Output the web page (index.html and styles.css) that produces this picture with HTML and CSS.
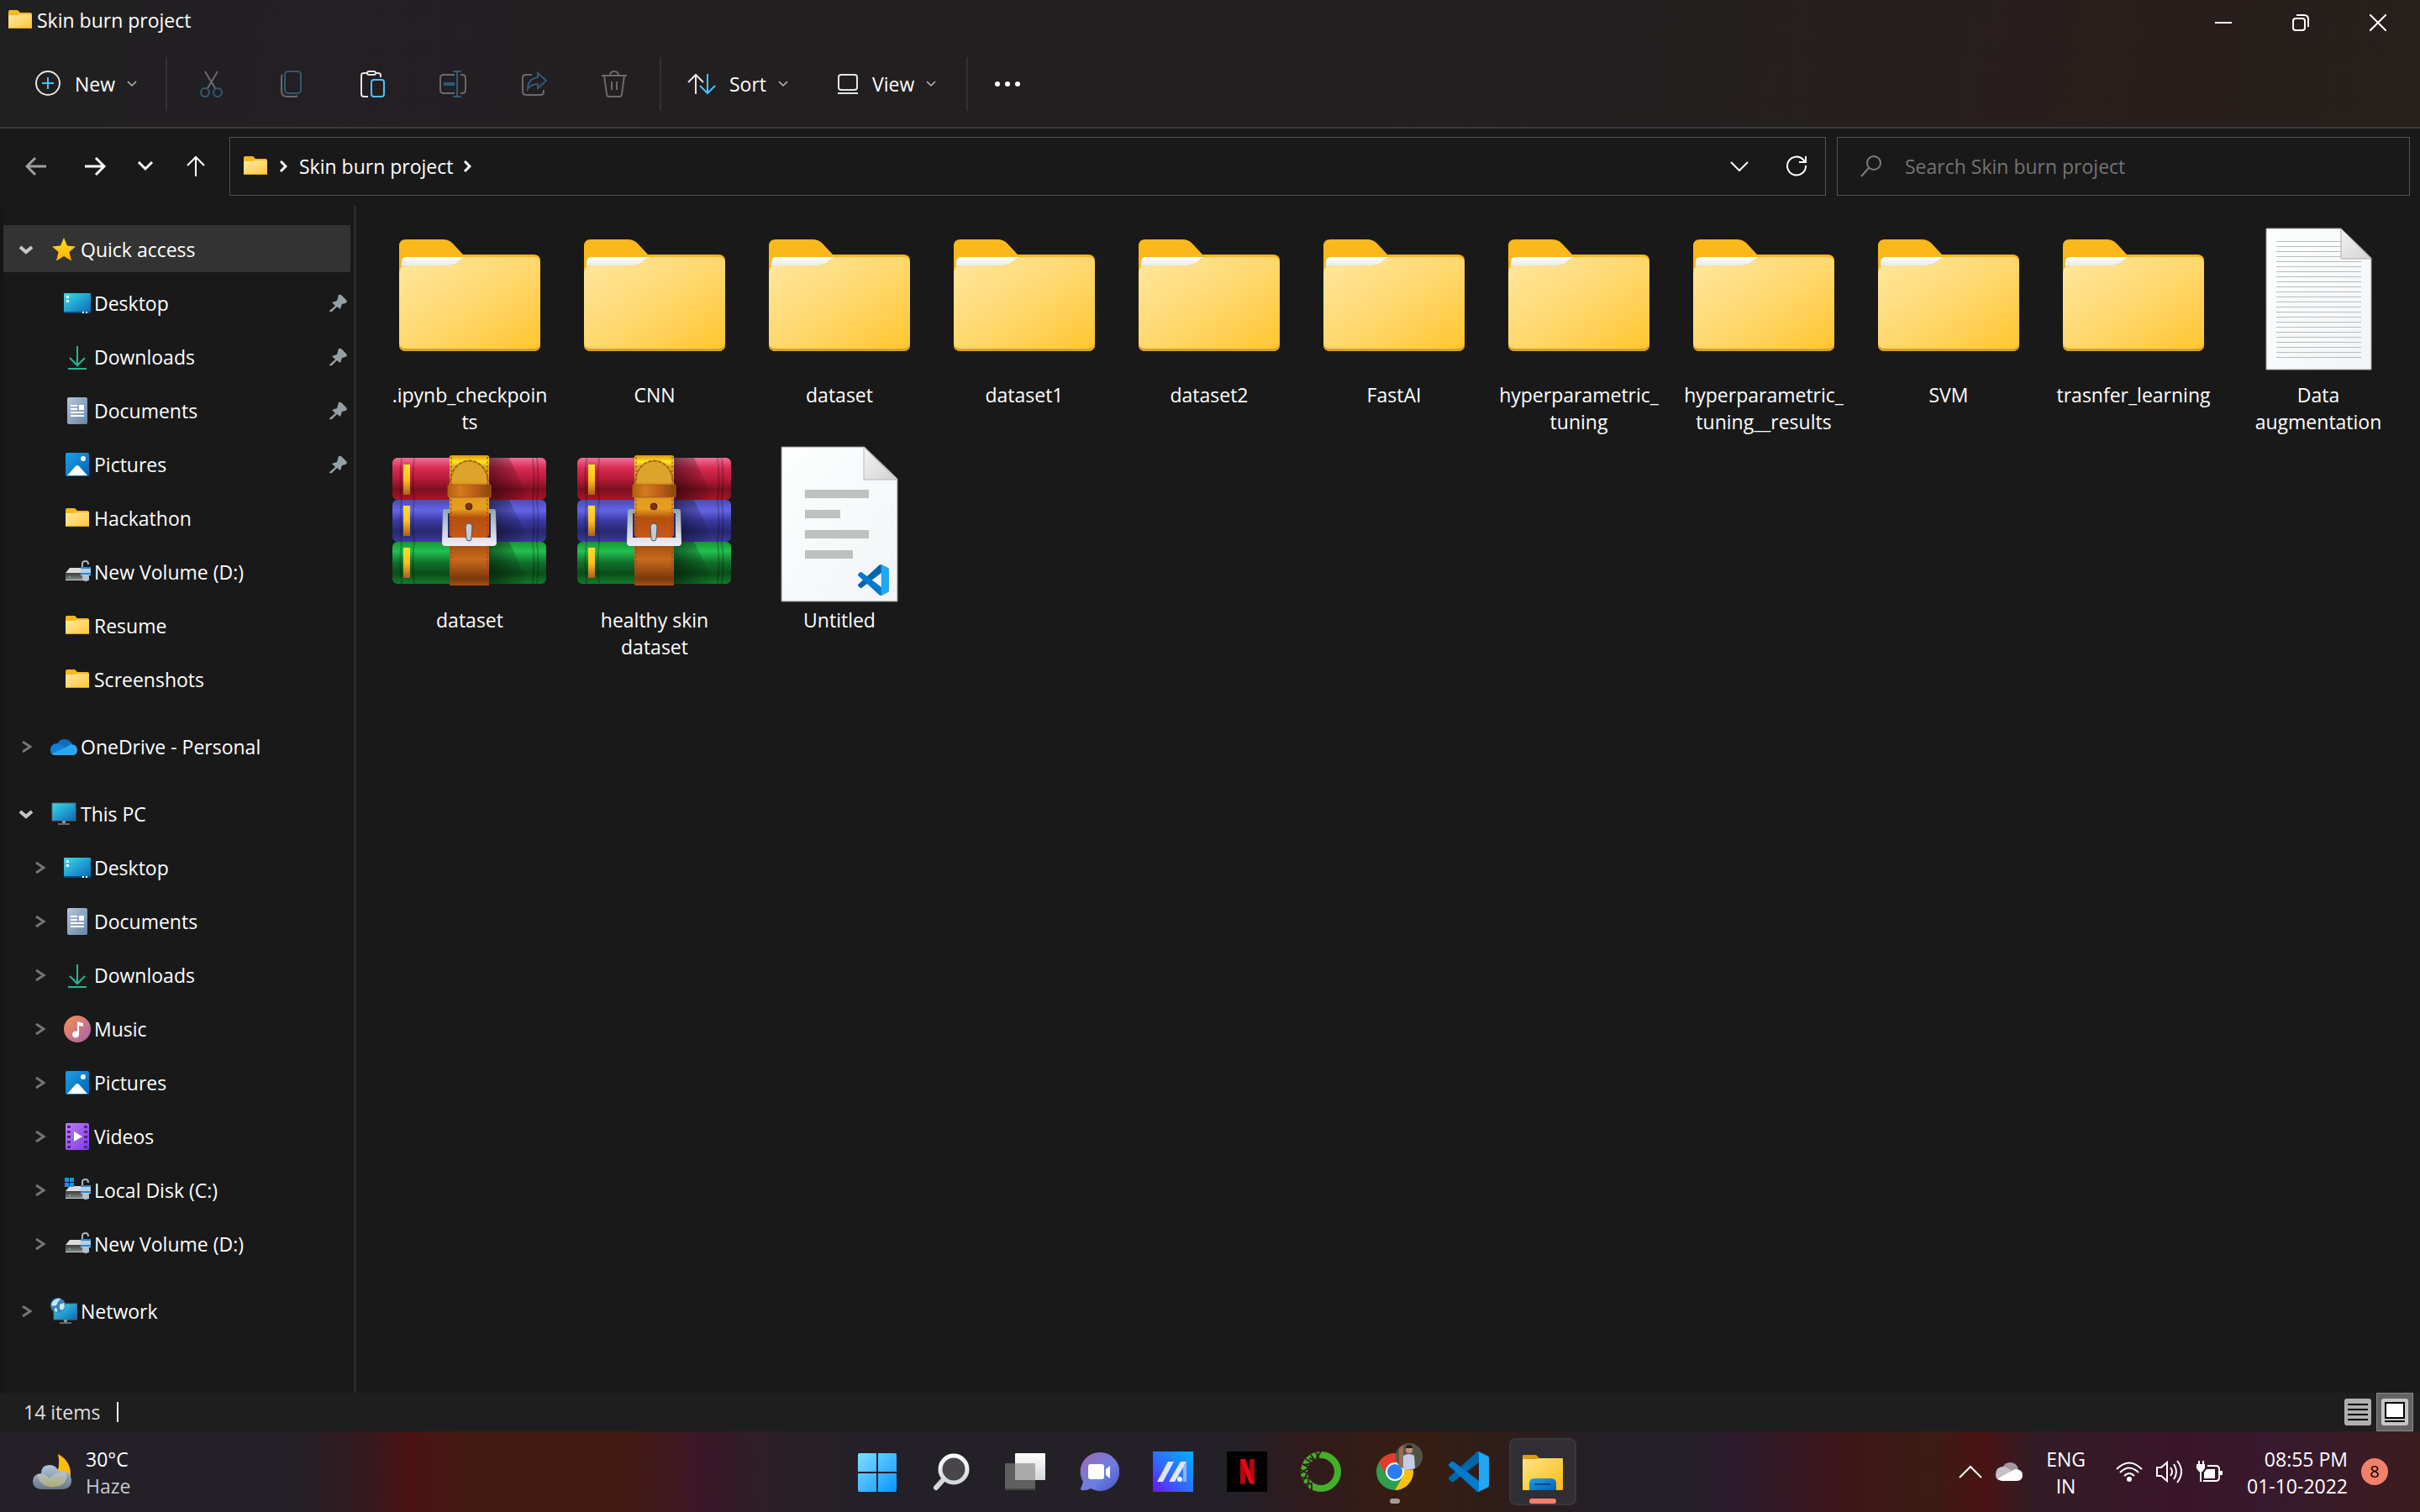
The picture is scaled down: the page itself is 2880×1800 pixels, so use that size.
FILE: index.html
```
<!DOCTYPE html>
<html lang="en">
<head>
<meta charset="UTF-8">
<meta name="viewport" content="width=device-width, initial-scale=1.0">
<title>Skin burn project</title>
<link rel="stylesheet" href="styles.css">
</head>
<body>

<!-- Shared icons -->
<svg class="sprite" aria-hidden="true">
    <defs>
        <linearGradient id="g-folder" x1="0" y1="0" x2="1" y2="1">
            <stop offset="0" stop-color="#ffe8a0"/><stop offset=".5" stop-color="#ffd86f"/><stop offset="1" stop-color="#ffc62f"/>
        </linearGradient>
        <linearGradient id="g-paper" x1="0" y1="0" x2="0" y2="1">
            <stop offset="0" stop-color="#ffffff"/><stop offset="1" stop-color="#d6dbe2"/>
        </linearGradient>
        <linearGradient id="g-page" x1="0" y1="0" x2="1" y2="1">
            <stop offset="0" stop-color="#fdfefe"/><stop offset="1" stop-color="#f3f4f7"/>
        </linearGradient>
        <linearGradient id="g-fold" x1="0" y1="0" x2="1" y2="1">
            <stop offset="0" stop-color="#f4f4f4"/><stop offset="1" stop-color="#d2d2d2"/>
        </linearGradient>
        <linearGradient id="g-screen" x1="0" y1="0" x2="1" y2="1">
            <stop offset="0" stop-color="#3adcea"/><stop offset="1" stop-color="#0a66b8"/>
        </linearGradient>
        <linearGradient id="g-star" x1="0" y1="0" x2="0" y2="1">
            <stop offset="0" stop-color="#ffdc1e"/><stop offset="1" stop-color="#ffb400"/>
        </linearGradient>
        <linearGradient id="g-doc" x1="0" y1="0" x2="1" y2="1">
            <stop offset="0" stop-color="#b6c7da"/><stop offset="1" stop-color="#6684a6"/>
        </linearGradient>
        <linearGradient id="g-pic" x1="0" y1="0" x2="1" y2="1">
            <stop offset="0" stop-color="#1ba1e6"/><stop offset="1" stop-color="#0561b5"/>
        </linearGradient>
        <linearGradient id="g-music" x1="0" y1="0" x2="1" y2="1">
            <stop offset="0" stop-color="#fa9150"/><stop offset="1" stop-color="#a45fb0"/>
        </linearGradient>
        <linearGradient id="g-video" x1="0" y1="0" x2="1" y2="1">
            <stop offset="0" stop-color="#c07bf5"/><stop offset="1" stop-color="#7d3ce0"/>
        </linearGradient>
        <linearGradient id="g-disk" x1="0" y1="0" x2="0" y2="1">
            <stop offset="0" stop-color="#3c3c3c"/><stop offset="1" stop-color="#8c8c8c"/>
        </linearGradient>
        <linearGradient id="g-red" x1="0" y1="0" x2="0" y2="1">
            <stop offset="0" stop-color="#f0709a"/><stop offset=".25" stop-color="#d82a52"/><stop offset=".5" stop-color="#b81c3a"/><stop offset=".75" stop-color="#7c1020"/><stop offset="1" stop-color="#a81428"/>
        </linearGradient>
        <linearGradient id="g-blue" x1="0" y1="0" x2="0" y2="1">
            <stop offset="0" stop-color="#4c4cb0"/><stop offset=".25" stop-color="#6464e8"/><stop offset=".5" stop-color="#3a3aa4"/><stop offset=".75" stop-color="#28286e"/><stop offset="1" stop-color="#3a3aa0"/>
        </linearGradient>
        <linearGradient id="g-green" x1="0" y1="0" x2="0" y2="1">
            <stop offset="0" stop-color="#149632"/><stop offset=".22" stop-color="#22c050"/><stop offset=".5" stop-color="#10702a"/><stop offset=".75" stop-color="#0c4c1a"/><stop offset="1" stop-color="#147c2c"/>
        </linearGradient>
        <linearGradient id="g-shade" x1="0" y1="0" x2="1" y2="0">
            <stop offset="0" stop-color="#000" stop-opacity=".6"/><stop offset="1" stop-color="#000" stop-opacity="0"/>
        </linearGradient>
        <linearGradient id="g-strap" x1="0" y1="0" x2="0" y2="1">
            <stop offset="0" stop-color="#d89a10"/><stop offset=".08" stop-color="#ffe81e"/><stop offset=".14" stop-color="#dca42a"/><stop offset=".45" stop-color="#dc9420"/><stop offset=".65" stop-color="#e8a020"/><stop offset=".76" stop-color="#b4500e"/><stop offset="1" stop-color="#c8581a"/>
        </linearGradient>
        <linearGradient id="g-strap2" x1="0" y1="0" x2="0" y2="1">
            <stop offset="0" stop-color="#a04a10"/><stop offset=".4" stop-color="#c86a1c"/><stop offset=".85" stop-color="#7a380c"/><stop offset="1" stop-color="#a85012"/>
        </linearGradient>
        <linearGradient id="g-loop" x1="0" y1="0" x2="1" y2="0">
            <stop offset="0" stop-color="#b4600e"/><stop offset=".3" stop-color="#d47c1e"/><stop offset=".6" stop-color="#c06018"/><stop offset="1" stop-color="#8c460c"/>
        </linearGradient>
        <linearGradient id="g-gold" x1="0" y1="0" x2="0" y2="1">
            <stop offset="0" stop-color="#ffe02a"/><stop offset=".5" stop-color="#ffc020"/><stop offset="1" stop-color="#a8601a"/>
        </linearGradient>
        <linearGradient id="g-steel" x1="0" y1="0" x2="0" y2="1">
            <stop offset="0" stop-color="#8fa4b0"/><stop offset=".5" stop-color="#c4ccd6"/><stop offset="1" stop-color="#f4eef6"/>
        </linearGradient>
        <linearGradient id="g-win" x1="0" y1="0" x2="1" y2="1">
            <stop offset="0" stop-color="#7fe0ff"/><stop offset="1" stop-color="#0a93ff"/>
        </linearGradient>
        <linearGradient id="g-chat" x1="0" y1="0" x2="1" y2="1">
            <stop offset="0" stop-color="#a868ac"/><stop offset=".4" stop-color="#7a78d4"/><stop offset=".6" stop-color="#6a7ee0"/><stop offset="1" stop-color="#4a50c0"/>
        </linearGradient>
        <linearGradient id="g-asus" x1="0" y1="1" x2="1" y2="0">
            <stop offset="0" stop-color="#6a12ff"/><stop offset=".45" stop-color="#2f6bff"/><stop offset="1" stop-color="#00b0ff"/>
        </linearGradient>
        <linearGradient id="g-expl" x1="0" y1="0" x2="1" y2="1">
            <stop offset="0" stop-color="#ffe48a"/><stop offset="1" stop-color="#fbb910"/>
        </linearGradient>
        <linearGradient id="g-ring" x1="0" y1="0" x2="0" y2="1">
            <stop offset="0" stop-color="#ffffff"/><stop offset="1" stop-color="#d3d6da"/>
        </linearGradient>
        <linearGradient id="g-cloud" x1="0" y1="0" x2="0" y2="1">
            <stop offset="0" stop-color="#b4c6dc"/><stop offset="1" stop-color="#66788c"/>
        </linearGradient>
        <linearGradient id="g-moonlit" x1="0" y1="0" x2="0" y2="1">
            <stop offset="0" stop-color="#b8c8d0"/><stop offset="1" stop-color="#c8b868"/>
        </linearGradient>
    </defs>

    <symbol id="folder-lg" viewBox="0 0 200 192">
        <path d="M16 33q0-8 8-8h44q7 0 12 5l12 13h84q8 0 8 8v99q0 8-8 8H24q-8 0-8-8z" fill="#fbb81a"/>
        <path d="M19 64V52q0-6 6-6h70L80 64z" fill="url(#g-paper)"/>
        <path d="M16 65q0-9 9-9h49q7 0 12-4l3-3q4-3 9-3h78q8 0 8 8v96q0 8-8 8H24q-8 0-8-8z" fill="#dca01e"/>
        <path d="M16 65q0-9 9-9h49q7 0 12-4l3-3q4-3 9-3h78q8 0 8 8v93q0 8-8 8H24q-8 0-8-8z" fill="url(#g-folder)"/>
    </symbol>

    <symbol id="textfile-lg" viewBox="0 0 200 192">
        <path d="M38 12h89l36 35v133H38z" fill="url(#g-page)" stroke="#9a9c9c"/>
        <path d="M50 27.500h77M50 33.500h77M50 39.500h77M50 45.500h77M50 51.500h101M50 57.500h101M50 63.500h101M50 69.500h101M50 75.500h101M50 81.500h101M50 87.500h101M50 93.500h101M50 99.500h101M50 105.500h101M50 111.500h101M50 117.500h101M50 123.500h101M50 129.500h101M50 135.500h101M50 141.500h101M50 147.500h101M50 153.500h101M50 159.500h101M50 165.500h101" stroke="#b9bbbb"/>
        <path d="M127 12l36 36h-36z" fill="url(#g-fold)" stroke="#aaa"/>
    </symbol>

    <symbol id="vscode" viewBox="0 0 100 100">
        <path fill="#0065a9" d="M96.460 10.800L75.860.880A6.200 6.200 0 0 0 68.750 2.080L1.300 63.580a4.170 4.170 0 0 0 0 6.160l5.510 5.010a4.170 4.170 0 0 0 5.320.240L93.360 13.370A4.140 4.140 0 0 1 100 16.670v-.240a6.250 6.250 0 0 0-3.540-5.630z"/>
        <path fill="#007acc" d="M96.460 89.200l-20.600 9.920a6.200 6.200 0 0 1-7.110-1.200L1.300 36.420a4.170 4.170 0 0 1 0-6.160l5.510-5.010a4.170 4.170 0 0 1 5.320-.240l81.230 61.620A4.140 4.140 0 0 0 100 83.330v.240a6.250 6.250 0 0 1-3.540 5.630z"/>
        <path fill="#23a6f2" d="M75.860 99.130a6.200 6.200 0 0 1-7.110-1.210C71.060 100.220 75 98.590 75 95.330V4.670c0-3.260-3.940-4.890-6.250-2.590A6.200 6.200 0 0 1 75.860.870l20.600 9.910A6.250 6.250 0 0 1 100 16.410v67.180a6.250 6.250 0 0 1-3.540 5.630z"/>
    </symbol>

    <symbol id="codefile-lg" viewBox="0 0 200 192">
        <path d="M31 4h99l39 38v146H31z" fill="url(#g-page)" stroke="#858989"/>
        <path d="M129 4l39 39h-39z" fill="url(#g-fold)" stroke="#b4b6b6"/>
        <path d="M59 55h76v10H59zM59 79h42v10H59zM59 103h76v10H59zM59 127h57v10H59z" fill="#bfc1c1"/>
        <use href="#vscode" x="122" y="144" width="37" height="37"/>
    </symbol>

    <symbol id="winrar-lg" viewBox="0 0 200 192">
        <rect x="8" y="17" width="183" height="50" rx="6" fill="url(#g-red)"/>
        <rect x="8" y="67" width="183" height="50" rx="6" fill="url(#g-blue)"/>
        <rect x="8" y="117" width="183" height="50" rx="6" fill="url(#g-green)"/>
        <path d="M123 17h24l24 50h-48zM123 67h24l24 50h-48zM123 117h24l24 50h-48z" fill="url(#g-shade)" opacity=".8"/>
        <path d="M19 17q-3 25 0 50M34 17q-3 25 0 50M175 17q3 25 0 50M180 17q3 25 0 50M19 67q-3 25 0 50M34 67q-3 25 0 50M175 67q3 25 0 50M180 67q3 25 0 50M19 117q-3 25 0 50M34 117q-3 25 0 50M175 117q3 25 0 50M180 117q3 25 0 50" fill="none" stroke="#000" stroke-opacity=".22" stroke-width="2"/>
        <rect x="21" y="25" width="8" height="36" fill="url(#g-gold)"/>
        <rect x="21" y="74" width="8" height="36" fill="url(#g-gold)"/>
        <rect x="21" y="124" width="8" height="36" fill="url(#g-gold)"/>
        <rect x="76" y="117" width="47" height="52" fill="url(#g-strap2)"/>
        <path d="M68 81q0-3 3-3h57q3 0 3 3l1 37q0 4-4 4H71q-4 0-4-4z" fill="url(#g-steel)"/>
        <path d="M74 83h51v29H74z" fill="#2b2b66"/>
        <path d="M76 16q0-2 3-2h41q3 0 3 2v91q0 5-5 5H81q-5 0-5-5z" fill="url(#g-strap)"/>
        <path d="M77 46C79 12 120 12 122 46" fill="#dca42a" stroke="#a8661a" stroke-width="2" stroke-dasharray="5 1"/>
        <path d="M78 16v92M121 16v92M78 124v44M121 124v44" stroke="#8a4a10" stroke-dasharray="3 2"/>
        <rect x="74" y="49" width="51" height="15" rx="1" fill="url(#g-loop)" stroke="#a86010"/>
        <circle cx="99" cy="75" r="4" fill="#7a3208" stroke="#55240a"/>
        <path d="M95 99q0-4 4-4t4 4l-1 14q0 3-3 3t-3-3z" fill="#c2ccd6" stroke="#50505a"/>
    </symbol>

    <symbol id="folder" viewBox="0 0 32 32">
        <path d="M2 6q0-2 2-2h8q2 0 3 2l1 1h12q2 0 2 2v16H2z" fill="#fbb81a"/>
        <path d="M2 11q0-1 1-1h9q2 0 3-1h14q1 0 1 1v15q0 1-1 1H3q-1 0-1-1z" fill="url(#g-folder)"/>
        <path d="M2 25h28q0 1-1 1H3q-1 0-1-1z" fill="#e0a21c"/>
    </symbol>
    <symbol id="star" viewBox="0 0 32 32">
        <path d="M16 2l4 9.500 10 .900-7.600 6.700 2.600 10.400-9-5.500-9 5.500 2.600-10.400L2 12.400l10-.900z" fill="url(#g-star)"/>
    </symbol>
    <symbol id="desktop" viewBox="0 0 32 32">
        <rect y="4" width="32" height="24" rx="1" fill="url(#g-screen)"/>
        <path d="M0 26h32v1q0 1-1 1H1q-1 0-1-1z" fill="#0a4a7c"/>
        <path d="M3 7h3v3H3zM3 12h3v3H3zM22 26h2v2h-2zM26 26h2v2h-2z" fill="#fff"/>
    </symbol>
    <symbol id="downloads" viewBox="0 0 32 32">
        <path d="M16 3v23M7 17l9 9 9-9M5 30h22" fill="none" stroke="#25b894" stroke-width="2"/>
    </symbol>
    <symbol id="documents" viewBox="0 0 32 32">
        <rect x="4" width="24" height="32" rx="2" fill="url(#g-doc)"/>
        <path d="M8 9h8v2H8zM8 13h8v2H8zM18 9h6v6h-6zM8 17h16v2H8zM8 21h16v2H8z" fill="#fff"/>
    </symbol>
    <symbol id="pictures" viewBox="0 0 32 32">
        <rect x="2" y="2" width="28" height="28" rx="2" fill="url(#g-pic)"/>
        <path d="M4 29l10-11q2-2 4 0l10 11z" fill="#fff"/><circle cx="23" cy="9" r="3" fill="#fff"/>
    </symbol>
    <symbol id="music" viewBox="0 0 32 32">
        <circle cx="16" cy="16" r="16" fill="url(#g-music)"/>
        <path d="M16 7l7 2v4l-5-1v11a4 4 0 1 1-2-4z" fill="#fff"/>
    </symbol>
    <symbol id="videos" viewBox="0 0 32 32">
        <rect x="2" width="28" height="32" rx="2" fill="url(#g-video)"/>
        <path d="M4 3h4v3H4zM4 9h4v3H4zM4 15h4v3H4zM4 21h4v3H4zM4 27h4v3H4zM24 3h4v3h-4zM24 9h4v3h-4zM24 15h4v3h-4zM24 21h4v3h-4zM24 27h4v3h-4z" fill="#4a2590"/>
        <path d="M12 10l10 6-10 6z" fill="#fff"/>
    </symbol>
    <symbol id="drive" viewBox="0 0 32 32">
        <path d="M7 11h23v6H2z" fill="#dcdcde"/>
        <path d="M2 17h28v9H2z" fill="url(#g-disk)"/><path d="M2 25h28v1H2z" fill="#c8c8c8"/>
        <circle cx="7" cy="22" r="1" fill="#3be03b"/>
        <path d="M22 12V6q0-3 4-3 3 0 3 4" fill="none" stroke="#a9b4bf" stroke-width="2"/>
        <path d="M20 10h12v10H20z" fill="#b7cde0"/><path d="M20 10h12v2H20zM20 17h12v2H20z" fill="#2088dc"/>
        <path d="M22 20h8v3q0 4-4 4t-4-4z" fill="#b4c0ca"/>
    </symbol>
    <symbol id="drive-c" viewBox="0 0 32 32">
        <use href="#drive"/>
        <path d="M1 1h5v5H1zM7 1h5v5H7zM1 7h5v5H1zM7 7h5v5H7z" fill="#1794e8"/>
    </symbol>
    <symbol id="onedrive" viewBox="0 0 32 32">
        <path d="M8 13q3-7 10-6 6 1 8 6l-10 5z" fill="#0f6cbd"/>
        <path d="M0 20q0-7 7-8 4 0 7 2l10 5-20 7q-4-1-4-6z" fill="#1080d8"/>
        <path d="M24 13q8 0 8 7 0 6-6 6H5q-2 0-3-2l14-6z" fill="#2aa6ee"/>
    </symbol>
    <symbol id="pc" viewBox="0 0 32 32">
        <rect x="2" y="3" width="28" height="21" fill="url(#g-screen)" stroke="#5a6670"/>
        <path d="M14 24h4v3h-4z" fill="#8a959c"/><path d="M9 27h14v2H9z" fill="#5d6a73"/>
    </symbol>
    <symbol id="network" viewBox="0 0 32 32">
        <rect x="4" y="7" width="28" height="19" fill="url(#g-screen)" stroke="#5a6670"/>
        <path d="M16 26h4v3h-4z" fill="#8a959c"/><path d="M11 29h14v2H11z" fill="#5d6a73"/>
        <circle cx="9" cy="9" r="9" fill="#3a86b4"/>
        <path d="M3 4q5-4 9-3l-3 4-2 4-4 1-2-2zM11 8l5-2 1 5-3 4-3-2zM5 12l3 1v4l-3-1z" fill="#c8e4f2"/>
    </symbol>
    <symbol id="pin" viewBox="0 0 22 22">
        <path d="M12 1q2-1 4 1l5 5q2 3-1 4l-4 1-2 6-4-3-6 6q-3 1-3-1l7-6-4-4 6-2z" fill="#949fa6"/>
    </symbol>
    <symbol id="chev-down" viewBox="0 0 18 18">
        <path d="M2 6l7 6 7-6" fill="none" stroke="currentColor" stroke-width="4"/>
    </symbol>
    <symbol id="chev-right" viewBox="0 0 18 18">
        <path d="M5 3l9 6-9 6" fill="none" stroke="currentColor" stroke-width="3"/>
    </symbol>
    <symbol id="chev-thin" viewBox="0 0 12 12">
        <path d="M1 3l5 5 5-5" fill="none" stroke="currentColor" stroke-width="1.500"/>
    </symbol>
</svg>

<div class="window">
    <header class="top">
        <!-- Title bar -->
        <div class="titlebar">
            <svg class="ico"><use href="#folder"/></svg>
            <h1>Skin burn project</h1>
            <div class="window-controls">
                <button aria-label="Minimize"><svg width="20" height="20"><path d="M0 10h20" stroke="#fff" stroke-width="2"/></svg></button>
                <button aria-label="Restore"><svg width="20" height="20" fill="none" stroke="#fff" stroke-width="2"><rect x="1" y="5" width="14" height="14" rx="3"/><path d="M5 1h9q5 0 5 5v9"/></svg></button>
                <button aria-label="Close"><svg width="20" height="20"><path d="M0 0l20 20M20 0L0 20" stroke="#fff" stroke-width="2"/></svg></button>
            </div>
        </div>

        <!-- Command bar -->
        <div class="commands">
            <button class="cmd cmd-new">
                <svg width="32" height="32" fill="none" stroke="#e4e4e4" stroke-width="2"><circle cx="16" cy="15" r="14"/><path d="M16 8v14M9 15h14" stroke="#4cc2ff"/></svg>
                <span>New</span><svg class="mini"><use href="#chev-thin"/></svg>
            </button>
            <span class="sep"></span>
            <button class="tool" aria-label="Cut"><svg width="32" height="32" fill="none" stroke="#6b696b" stroke-width="2"><path d="M9 1l12 20M24 1L12 21"/><g stroke="#2f5a76"><circle cx="9" cy="26" r="5"/><circle cx="24" cy="26" r="5"/></g></svg></button>
            <button class="tool" aria-label="Copy"><svg width="32" height="32" fill="none" stroke="#6b696b" stroke-width="2"><path d="M5 5q-1 1-1 4v15q0 7 7 7h9q2 0 3-1"/><rect x="8" y="1" width="19" height="26" rx="4" stroke="#2f5a76"/></svg></button>
            <button class="tool" aria-label="Paste"><svg width="32" height="32" fill="none" stroke="#e4e4e4" stroke-width="2"><path d="M10 3H6q-3 0-3 3v22q0 3 3 3h5M20 3h3q3 0 3 3v2"/><rect x="10" y="1" width="10" height="4" rx="2"/><rect x="15" y="11" width="15" height="20" rx="3" stroke="#4cc2ff"/></svg></button>
            <button class="tool" aria-label="Rename"><svg width="34" height="32" fill="none" stroke="#6b696b" stroke-width="2"><path d="M19 5H6q-4 0-4 4v14q0 4 4 4h13M26 5h2q4 0 4 4v14q0 4-4 4h-2"/><path d="M22 1v30M17 1h10M17 31h10" stroke="#2f5a76"/><path d="M6 16h13" stroke="#2f5a76" stroke-width="4"/></svg></button>
            <button class="tool" aria-label="Share"><svg width="32" height="32" fill="none" stroke="#6b696b" stroke-width="2"><path d="M14 5H7q-4 0-4 4v16q0 4 4 4h17q4 0 4-4v-2"/><path d="M21 3l10 9-10 9v-5q-8 0-12 6 0-12 12-14z" stroke="#2f5a76"/></svg></button>
            <button class="tool" aria-label="Delete"><svg width="32" height="32" fill="none" stroke="#6b696b" stroke-width="2"><path d="M1 6h30M11 6q0-5 5-5t5 5M4 6l3 22q0 3 3 3h12q3 0 3-3l3-22M13 13v10M19 13v10"/></svg></button>
            <span class="sep"></span>
            <button class="cmd cmd-sort">
                <svg width="34" height="26" fill="none" stroke="#e4e4e4" stroke-width="2"><path d="M10 25V2M1 11l9-9 9 9"/><path d="M24 1v23M15 15l9 9 9-9" stroke="#4cc2ff"/></svg>
                <span>Sort</span><svg class="mini"><use href="#chev-thin"/></svg>
            </button>
            <button class="cmd cmd-view">
                <svg width="26" height="26" fill="none" stroke="#e4e4e4" stroke-width="2"><rect x="2" y="2" width="22" height="18" rx="3"/><path d="M1 24h24"/></svg>
                <span>View</span><svg class="mini"><use href="#chev-thin"/></svg>
            </button>
            <span class="sep"></span>
            <button class="tool more" aria-label="See more"><svg width="32" height="8" fill="#fff"><circle cx="4" cy="4" r="3"/><circle cx="16" cy="4" r="3"/><circle cx="28" cy="4" r="3"/></svg></button>
        </div>
    </header>

    <!-- Navigation bar -->
    <nav class="navbar">
        <button class="nav-btn" aria-label="Back"><svg width="26" height="24" fill="none" stroke="#a0a0a0" stroke-width="3"><path d="M25 12H2M12 2L2 12l10 10"/></svg></button>
        <button class="nav-btn" aria-label="Forward"><svg width="26" height="24" fill="none" stroke="#fff" stroke-width="3"><path d="M1 12h23M14 2l10 10-10 10"/></svg></button>
        <button class="nav-btn nav-recent" aria-label="Recent locations"><svg width="20" height="12" fill="none" stroke="#fff" stroke-width="3"><path d="M2 1l8 8 8-8"/></svg></button>
        <button class="nav-btn nav-up" aria-label="Up"><svg width="24" height="26" fill="none" stroke="#fff" stroke-width="2"><path d="M12 25V2M2 12L12 2l10 10"/></svg></button>
        <div class="address">
            <svg class="ico"><use href="#folder"/></svg>
            <svg class="crumb-arrow" width="10" height="14" fill="none" stroke="#fff" stroke-width="3"><path d="M2 1l6 6-6 6"/></svg>
            <a href="#">Skin burn project</a>
            <svg class="crumb-arrow" width="10" height="14" fill="none" stroke="#fff" stroke-width="3"><path d="M2 1l6 6-6 6"/></svg>
            <button class="addr-btn push" aria-label="Previous locations"><svg width="22" height="14" fill="none" stroke="#fff" stroke-width="2"><path d="M1 2l10 10L21 2"/></svg></button>
            <button class="addr-btn" aria-label="Refresh"><svg width="26" height="26" fill="none" stroke="#fff" stroke-width="2"><path d="M24 12a11 11 0 1 1-3-7l2 3M24 1v7h-8"/></svg></button>
        </div>
        <label class="search">
            <svg width="28" height="28" fill="none" stroke="#7d7d7d" stroke-width="2"><circle cx="17" cy="10" r="8"/><path d="M11 16L2 26"/></svg>
            <input type="text" placeholder="Search Skin burn project" aria-label="Search Skin burn project">
        </label>
    </nav>

    <div class="body">
        <!-- Folder tree -->
        <aside class="sidebar">
            <ul>
                <li><a class="row selected" href="#"><svg class="twisty open"><use href="#chev-down"/></svg><svg class="ico"><use href="#star"/></svg>Quick access</a></li>
                <li><a class="row child" href="#"><span class="twisty"></span><svg class="ico"><use href="#desktop"/></svg>Desktop<svg class="pin"><use href="#pin"/></svg></a></li>
                <li><a class="row child" href="#"><span class="twisty"></span><svg class="ico"><use href="#downloads"/></svg>Downloads<svg class="pin"><use href="#pin"/></svg></a></li>
                <li><a class="row child" href="#"><span class="twisty"></span><svg class="ico"><use href="#documents"/></svg>Documents<svg class="pin"><use href="#pin"/></svg></a></li>
                <li><a class="row child" href="#"><span class="twisty"></span><svg class="ico"><use href="#pictures"/></svg>Pictures<svg class="pin"><use href="#pin"/></svg></a></li>
                <li><a class="row child" href="#"><span class="twisty"></span><svg class="ico"><use href="#folder"/></svg>Hackathon</a></li>
                <li><a class="row child" href="#"><span class="twisty"></span><svg class="ico"><use href="#drive"/></svg>New Volume (D:)</a></li>
                <li><a class="row child" href="#"><span class="twisty"></span><svg class="ico"><use href="#folder"/></svg>Resume</a></li>
                <li><a class="row child" href="#"><span class="twisty"></span><svg class="ico"><use href="#folder"/></svg>Screenshots</a></li>
            </ul>
            <ul>
                <li><a class="row" href="#"><svg class="twisty"><use href="#chev-right"/></svg><svg class="ico"><use href="#onedrive"/></svg>OneDrive - Personal</a></li>
            </ul>
            <ul>
                <li><a class="row" href="#"><svg class="twisty open"><use href="#chev-down"/></svg><svg class="ico"><use href="#pc"/></svg>This PC</a></li>
                <li><a class="row child" href="#"><svg class="twisty"><use href="#chev-right"/></svg><svg class="ico"><use href="#desktop"/></svg>Desktop</a></li>
                <li><a class="row child" href="#"><svg class="twisty"><use href="#chev-right"/></svg><svg class="ico"><use href="#documents"/></svg>Documents</a></li>
                <li><a class="row child" href="#"><svg class="twisty"><use href="#chev-right"/></svg><svg class="ico"><use href="#downloads"/></svg>Downloads</a></li>
                <li><a class="row child" href="#"><svg class="twisty"><use href="#chev-right"/></svg><svg class="ico"><use href="#music"/></svg>Music</a></li>
                <li><a class="row child" href="#"><svg class="twisty"><use href="#chev-right"/></svg><svg class="ico"><use href="#pictures"/></svg>Pictures</a></li>
                <li><a class="row child" href="#"><svg class="twisty"><use href="#chev-right"/></svg><svg class="ico"><use href="#videos"/></svg>Videos</a></li>
                <li><a class="row child" href="#"><svg class="twisty"><use href="#chev-right"/></svg><svg class="ico"><use href="#drive-c"/></svg>Local Disk (C:)</a></li>
                <li><a class="row child" href="#"><svg class="twisty"><use href="#chev-right"/></svg><svg class="ico"><use href="#drive"/></svg>New Volume (D:)</a></li>
            </ul>
            <ul>
                <li><a class="row" href="#"><svg class="twisty"><use href="#chev-right"/></svg><svg class="ico"><use href="#network"/></svg>Network</a></li>
            </ul>
        </aside>

        <!-- Files -->
        <main class="files">
            <a class="file" href="#"><svg><use href="#folder-lg"/></svg><span>.ipynb_checkpoin<wbr>ts</span></a>
            <a class="file" href="#"><svg><use href="#folder-lg"/></svg><span>CNN</span></a>
            <a class="file" href="#"><svg><use href="#folder-lg"/></svg><span>dataset</span></a>
            <a class="file" href="#"><svg><use href="#folder-lg"/></svg><span>dataset1</span></a>
            <a class="file" href="#"><svg><use href="#folder-lg"/></svg><span>dataset2</span></a>
            <a class="file" href="#"><svg><use href="#folder-lg"/></svg><span>FastAI</span></a>
            <a class="file" href="#"><svg><use href="#folder-lg"/></svg><span>hyperparametric_<wbr>tuning</span></a>
            <a class="file" href="#"><svg><use href="#folder-lg"/></svg><span>hyperparametric_<wbr>tuning__results</span></a>
            <a class="file" href="#"><svg><use href="#folder-lg"/></svg><span>SVM</span></a>
            <a class="file" href="#"><svg><use href="#folder-lg"/></svg><span>trasnfer_learning</span></a>
            <a class="file" href="#"><svg><use href="#textfile-lg"/></svg><span>Data augmentation</span></a>
            <a class="file" href="#"><svg><use href="#winrar-lg"/></svg><span>dataset</span></a>
            <a class="file" href="#"><svg><use href="#winrar-lg"/></svg><span>healthy skin dataset</span></a>
            <a class="file" href="#"><svg><use href="#codefile-lg"/></svg><span>Untitled</span></a>
        </main>
    </div>

    <!-- Status bar -->
    <div class="status">
        <span class="count">14 items</span>
        <button class="view-btn" aria-label="Details"><svg width="32" height="32"><rect width="32" height="32" rx="3" fill="#b0b0b0"/><path d="M4 7h24M4 13h24M4 19h24M4 25h24" stroke="#000" stroke-width="2"/></svg></button>
        <button class="view-btn active" aria-label="Large icons"><svg width="32" height="32"><rect width="32" height="32" rx="3" fill="#c6c6c6"/><rect x="5" y="5" width="22" height="18" fill="#fff" stroke="#000" stroke-width="2"/><path d="M4 27h24" stroke="#000" stroke-width="2"/></svg></button>
    </div>
</div>

<!-- Taskbar -->
<footer class="taskbar">
    <button class="weather">
        <svg width="48" height="44"><path d="M31 1q15 8 15 24 0 8-5 14l-15-8q9-14 5-30z" fill="#fdbc10"/><path d="M11 24q0-10 10-10 8 0 11 8 13-3 15 9 1 12-12 12H13Q1 43 1 33q0-8 10-9z" fill="url(#g-cloud)"/><path d="M6 25q8-2 15 5 6-8 20-8 3 16-14 18Q10 42 6 25z" fill="url(#g-moonlit)" opacity=".75"/></svg>
        <span class="weather-text"><span>30°C</span><span class="dim">Haze</span></span>
    </button>

    <div class="apps">
        <button class="app" aria-label="Start"><svg viewBox="0 0 48 48"><path d="M3 2h20v22H1V4q0-2 2-2zM25 2h20q2 0 2 2v20H25zM1 26h22v22H3q-2 0-2-2zM25 26h22v20q0 2-2 2H25z" fill="url(#g-win)"/></svg></button>
        <button class="app" aria-label="Search"><svg viewBox="0 0 48 48"><path d="M15 33L6 43" stroke="#d5d8db" stroke-width="6" stroke-linecap="round"/><circle cx="27" cy="21" r="16" fill="#48464b" stroke="url(#g-ring)" stroke-width="5"/></svg></button>
        <button class="app" aria-label="Task view"><svg viewBox="0 0 48 48"><rect x="12" y="2" width="36" height="32" rx="1" fill="url(#g-ring)"/><rect y="14" width="36" height="32" rx="1" fill="#747474" fill-opacity=".75"/><path d="M12 14h24v20H12z" fill="#bcbcbc" fill-opacity=".6"/><path d="M0 44h36v2H0z" fill="#444"/></svg></button>
        <button class="app" aria-label="Chat"><svg viewBox="0 0 48 48"><path d="M24 1a23 23 0 1 1-10 43Q8 47 3 46q-2-1 0-4l2-6A23 23 0 0 1 24 1z" fill="url(#g-chat)"/><rect x="11" y="15" width="19" height="18" rx="3" fill="#fff"/><path d="M32 21l5-4v15l-5-4z" fill="#fff"/></svg></button>
        <button class="app" aria-label="MyASUS"><svg viewBox="0 0 48 48"><path d="M0 0h48v48H0z" fill="url(#g-asus)"/><path d="M18 12h7L12 36H5zM33 12h7L26 36h-7z" fill="#e4e4ff"/><path d="M36 19l4-7v24h-4z" fill="#8fb4ff"/><circle cx="32" cy="33" r="3" fill="#fff"/></svg></button>
        <button class="app" aria-label="Netflix"><svg viewBox="0 0 48 48"><path d="M0 0h48v48H0z" fill="#000"/><path d="M16 9h6v29l-6 1zM27 9h6v30l-6-1z" fill="#b1060f"/><path d="M16 9h6l11 30-6-1z" fill="#e50914"/></svg></button>
        <button class="app" aria-label="Anaconda"><svg viewBox="0 0 48 48" fill="none"><circle cx="24" cy="24" r="20" stroke="#44b02a" stroke-width="8"/><path d="M24 0l-6 9M18 1l4 8M12 4l5 7M17 11l-7-3M6 9l8 5M14 14l-10 2M2 15l9 4M10 19L0 26M0 22l8 4M8 26L2 36M1 31l9 1M10 32l-2 10M5 39l9-1M13 38v10" stroke="#32201a" stroke-width="2"/></svg></button>
        <button class="app running" aria-label="Chrome">
            <svg viewBox="0 0 48 48"><circle cx="24" cy="24" r="22" fill="#2f9e4f"/><path d="M5 13A22 22 0 0 1 43 13L33 20H24L14 28z" fill="#e33b2e"/><path d="M30 13h13a22 22 0 0 1-19 33l10-17z" fill="#fcc010"/><circle cx="24" cy="24" r="11" fill="#fff"/><circle cx="24" cy="24" r="9" fill="#2b7bf3"/></svg>
            <svg class="avatar" viewBox="0 0 32 32"><circle cx="16" cy="16" r="16" fill="#5b5444"/><path d="M4 6l5-4v28l-5-4z" fill="#94705a"/><path d="M22 3a16 16 0 0 1 6 22l-4 2z" fill="#49553f"/><path d="M9 15q7-4 13 0l1 15q-7 3-14 1z" fill="#c3cde8"/><circle cx="16" cy="8" r="4" fill="#c08f80"/><path d="M12 6q0-4 4-4t4 4z" fill="#241c1c"/></svg>
        </button>
        <button class="app" aria-label="Visual Studio Code"><svg><use href="#vscode"/></svg></button>
        <button class="app current" aria-label="File Explorer"><svg viewBox="0 0 48 48"><path d="M0 5q0-1 1-1h14q2 0 3 2l2 2v8H0z" fill="#dd9c08"/><path d="M0 10q0-1 1-1h15l4-1h27q1 0 1 1v36q0 1-1 1H1q-1 0-1-1z" fill="url(#g-expl)"/><path d="M8 46V38q0-6 6-6h20q6 0 6 6v8z" fill="url(#g-pic)"/><path d="M15 39h18" stroke="#07488c" stroke-width="2" stroke-linecap="round"/></svg></button>
    </div>

    <div class="tray">
        <button aria-label="Show hidden icons"><svg width="28" height="16" fill="none" stroke="#fff" stroke-width="2"><path d="M1 15L14 2l13 13"/></svg></button>
        <button aria-label="OneDrive"><svg width="32" height="22"><path d="M8 6q3-6 9-6 8 0 10 8l-12 6z" fill="#a498a0"/><path d="M0 14q0-8 8-9 5 0 8 3l8 5-20 8q-4-1-4-7z" fill="#c9bfc6"/><path d="M3 19l20-11q9 0 9 7 0 7-7 7H8q-4 0-5-3z" fill="#fff"/></svg></button>
        <button class="lang"><span>ENG</span><span>IN</span></button>
        <button class="quick" aria-label="Network, volume and battery">
            <svg width="32" height="24" fill="none" stroke="#fff" stroke-width="2"><path d="M1 9q15-15 30 0M5 13q11-11 22 0M10 17q6-6 12 0"/><circle cx="16" cy="21" r="2" fill="#fff"/></svg>
            <svg width="32" height="28" fill="none" stroke="#fff" stroke-width="2"><path d="M1 9h5l7-6v22l-7-6H1zM17 9q4 5 0 10M21 5q6 9 0 18M25 1q10 13 0 26"/></svg>
            <svg width="32" height="26" fill="none" stroke="#fff" stroke-width="2"><path d="M13 6h10q4 0 4 4v10q0 4-4 4H8M5 12v13"/><path d="M12 10h10v11H9v-7zM28 12h3v5h-3zM0 4h10v5l-3 4H3L0 9zM2 0h2v5H2zM7 0h2v5H7z" fill="#fff" stroke="none"/></svg>
        </button>
        <button class="clock"><span>08:55 PM</span><span>01-10-2022</span></button>
        <span class="badge">8</span>
    </div>
</footer>

</body>
</html>
```
FILE: styles.css
```
* {
    box-sizing: border-box;
}

html, body {
    height: 100%;
    margin: 0;
}

body {
    display: flex;
    flex-direction: column;
    font-family: "Segoe UI", "Open Sans", "Noto Sans", sans-serif;
    font-size: 23px;
    line-height: 32px;
    color: #fff;
    background-color: #191919;
}

button {
    display: flex;
    align-items: center;
    justify-content: center;
    padding: 0;
    border: none;
    background: none;
    color: inherit;
    font: inherit;
    cursor: pointer;
}

a {
    color: inherit;
    text-decoration: none;
}

svg {
    flex: none;
    display: block;
}

.sprite {
    position: absolute;
    width: 0;
    height: 0;
}

.ico {
    width: 32px;
    height: 32px;
}

.window {
    flex: 1;
    min-height: 0;
    display: flex;
    flex-direction: column;
}

/* Title bar and commands */
.top {
    background: linear-gradient(100deg, #202020, #231f23 12%, #221f20 38%, #241f1f 70%, #281e1c 86%, #261f1a);
    border-bottom: 2px solid #3b3939;
}

.titlebar {
    display: flex;
    align-items: center;
    height: 48px;
    padding: 0 4px 0 8px;
}

.titlebar h1 {
    margin: 0 0 0 4px;
    font-size: 23px;
    font-weight: 400;
}

.window-controls {
    display: flex;
    margin-left: auto;
    height: 100%;
}

.window-controls button {
    width: 92px;
    padding-top: 6px;
}

.commands {
    display: flex;
    align-items: center;
    height: 103px;
    padding: 0 0 0 41px;
}

.sep {
    width: 2px;
    height: 64px;
    margin: 0 4px 0 6px;
    background-color: #333133;
}

.cmd {
    justify-content: flex-start;
    height: 64px;
}

.cmd span {
    margin: 0 14px 0 16px;
}

.mini {
    width: 12px;
    height: 12px;
    color: #bbb;
}

.cmd-new {
    width: 124px;
    margin-right: 26px;
}

.cmd-sort {
    margin: 0 58px 0 27px;
}

.cmd-view {
    margin-right: 30px;
}

.tool {
    width: 96px;
    height: 64px;
}

.more {
    width: 86px;
}

/* Navigation */
.navbar {
    display: flex;
    align-items: center;
    height: 92px;
    padding: 0 12px 2px 8px;
}

.nav-btn {
    width: 70px;
    height: 64px;
}

.nav-recent {
    width: 50px;
}

.nav-up {
    width: 70px;
    margin-right: 5px;
}

.address {
    flex: 1;
    display: flex;
    align-items: center;
    height: 70px;
    padding: 0 0 0 14px;
    border: 1px solid #535353;
}

.crumb-arrow {
    margin: 0 14px 0 12px;
}

.addr-btn {
    width: 68px;
    height: 68px;
}

.push {
    margin-left: auto;
}

.search {
    flex: 0 1 682px;
    display: flex;
    align-items: center;
    height: 70px;
    margin-left: 13px;
    padding-left: 26px;
    border: 1px solid #535353;
}

.search input {
    flex: 1;
    min-width: 0;
    margin-left: 24px;
    border: none;
    outline: none;
    background: none;
    color: #fff;
    font: inherit;
}

.search input::placeholder {
    color: #747474;
    opacity: 1;
}

.body {
    flex: 1;
    min-height: 0;
    display: flex;
}

/* Folder tree */
.sidebar {
    width: 424px;
    padding: 23px 4px 0 0;
    border-left: 4px solid #151515;
    border-right: 3px solid #2a2a2a;
    overflow: hidden;
}

.sidebar ul {
    display: flex;
    flex-direction: column;
    gap: 8px;
    margin: 0 0 24px;
    padding: 0;
    list-style: none;
}

.row {
    display: flex;
    align-items: center;
    gap: 4px;
    height: 56px;
    padding: 2px 4px 0 18px;
}

.row.child {
    padding-left: 34px;
}

.row.selected {
    background-color: #333;
}

.twisty {
    flex: none;
    width: 18px;
    height: 18px;
    margin-right: 16px;
    color: #757575;
}

.twisty.open {
    color: #c8c8c8;
}

.pin {
    width: 22px;
    height: 22px;
    margin-left: auto;
}

/* Files */
.files {
    flex: 1;
    display: grid;
    grid-template-columns: repeat(auto-fill, 200px);
    grid-auto-rows: 256px;
    align-content: start;
    gap: 12px 20px;
    padding: 15px 16px 0 35px;
}

.file {
    display: flex;
    flex-direction: column;
    align-items: center;
    gap: 2px;
    text-align: center;
}

.file svg {
    width: 200px;
    height: 192px;
}

/* Status bar */
.status {
    display: flex;
    align-items: center;
    height: 46px;
    padding: 0 8px 0 28px;
    background-color: #1e1e1e;
    color: #dedede;
}

.count {
    margin-right: auto;
    padding-right: 20px;
    line-height: 24px;
    border-right: 2px solid #fff;
}

.view-btn {
    width: 44px;
    height: 46px;
}

.view-btn.active {
    border: 1px solid #8a8a8a;
    background-color: #636363;
}

/* Taskbar */
.taskbar {
    display: grid;
    grid-template-columns: 1fr auto 1fr;
    align-items: center;
    height: 96px;
    padding: 0 38px;
    background: linear-gradient(90deg,
        #232027 12%, #35191f 15%, #4a1313 17%, #431a12 19%, #421a12 26%,
        #3c1729 29%, #2b2028 32%, #232027 36%, #232027 51%, #301a1d 54%,
        #371d12 58%, #2d1d1b 63%, #232027 66%, #232027 69%, #2e1a2c 72%,
        #3c1618 76%, #3c1c12 80%, #4a1313 82%, #331c26 84%, #3a1529 90%,
        #38192d 94%, #3a1c1f 100%);
}

.weather {
    justify-self: start;
    gap: 16px;
}

.weather-text,
.lang,
.clock {
    display: flex;
    flex-direction: column;
    align-items: flex-start;
    padding-top: 2px;
}

.dim {
    color: #c8c6c9;
}

.apps {
    display: flex;
    gap: 8px;
}

.app {
    position: relative;
    width: 80px;
    height: 80px;
    border-radius: 8px;
}

.app svg {
    width: 48px;
    height: 48px;
}

.app .avatar {
    position: absolute;
    top: 6px;
    right: 7px;
    width: 32px;
    height: 32px;
}

.app.current {
    background-color: #302d33;
    border: 2px solid #3a373d;
}

.app.running::after,
.app.current::after {
    content: "";
    position: absolute;
    bottom: 2px;
    width: 12px;
    height: 6px;
    border-radius: 3px;
    background-color: #a39c9a;
}

.app.current::after {
    bottom: 0;
    width: 32px;
    background-color: #f4806a;
}

.tray {
    justify-self: end;
    display: flex;
    align-items: center;
    gap: 16px;
}

.lang {
    align-items: center;
    margin: 0 20px 0 12px;
}

.quick {
    gap: 16px;
    margin-right: 12px;
}

.clock {
    align-items: flex-end;
}

.badge {
    width: 32px;
    height: 32px;
    border-radius: 50%;
    background-color: #f4806a;
    color: #000;
    font-size: 20px;
    text-align: center;
}
```
